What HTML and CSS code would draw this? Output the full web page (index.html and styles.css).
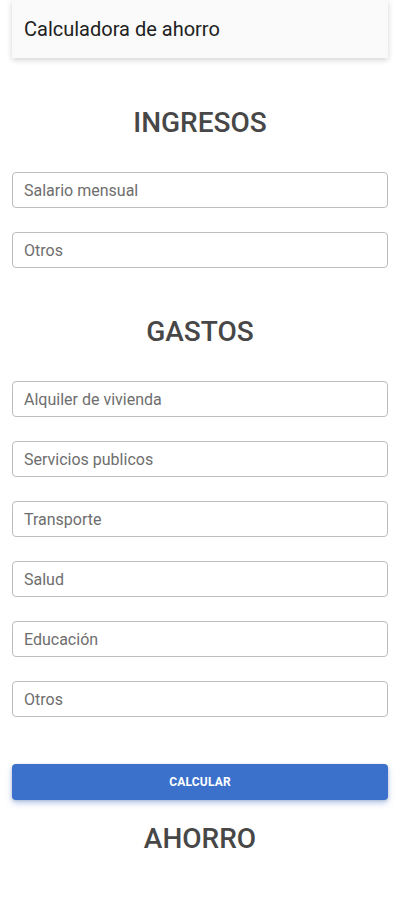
FILE: index.html
```html
<!DOCTYPE html>
<html lang="es">
<head>
<meta charset="utf-8">
<title>Calculadora de ahorro</title>
<link rel="stylesheet" href="styles.css">
</head>
<body>
<div class="page">
  <header class="toolbar">Calculadora de ahorro</header>
  <main class="content">
    <h2 class="heading first">INGRESOS</h2>
    <input class="field" type="text" placeholder="Salario mensual">
    <input class="field" type="text" placeholder="Otros">
    <h2 class="heading">GASTOS</h2>
    <input class="field" type="text" placeholder="Alquiler de vivienda">
    <input class="field" type="text" placeholder="Servicios publicos">
    <input class="field" type="text" placeholder="Transporte">
    <input class="field" type="text" placeholder="Salud">
    <input class="field" type="text" placeholder="Educación">
    <input class="field" type="text" placeholder="Otros">
    <button class="calc" type="button">CALCULAR</button>
    <h2 class="heading result">AHORRO</h2>
  </main>
</div>
</body>
</html>
```
FILE: styles.css
```css
html, body {
  margin: 0;
  padding: 0;
  background: #ffffff;
  font-family: Roboto, "Liberation Sans", sans-serif;
}
.page {
  padding: 0 12px;
}
.toolbar {
  height: 58px;
  box-sizing: border-box;
  background: #fafafa;
  box-shadow: 0 2px 6px rgba(0,0,0,0.18);
  padding: 0 12px;
  display: flex;
  align-items: center;
  font-size: 20px;
  color: #212121;
}
.content {
  display: flex;
  flex-direction: column;
}
.heading {
  margin: 22px 0 31px;
  text-align: center;
  font-size: 28px;
  line-height: 36px;
  font-weight: 500;
  color: #474747;
}
.heading.first {
  margin-top: 47px;
}
.heading.result {
  margin-top: 21px;
}
.field {
  display: block;
  box-sizing: border-box;
  width: 100%;
  height: 36px;
  margin: 0 0 24px;
  padding: 0 11px;
  border: 1px solid #bdbdbd;
  border-radius: 4px;
  font-family: Roboto, "Liberation Sans", sans-serif;
  font-size: 16px;
  color: #333;
  background: #fff;
}
.field::placeholder {
  color: #6e6e6e;
}
.calc {
  margin-top: 23px;
  height: 36px;
  width: 100%;
  border: none;
  border-radius: 4px;
  background: #3b70cb;
  color: #ffffff;
  font-family: Roboto, "Liberation Sans", sans-serif;
  font-size: 12px;
  font-weight: 700;
  letter-spacing: 0.2px;
  box-shadow: 0 3px 6px rgba(59,112,203,0.35), 0 1px 3px rgba(0,0,0,0.15);
}
```
